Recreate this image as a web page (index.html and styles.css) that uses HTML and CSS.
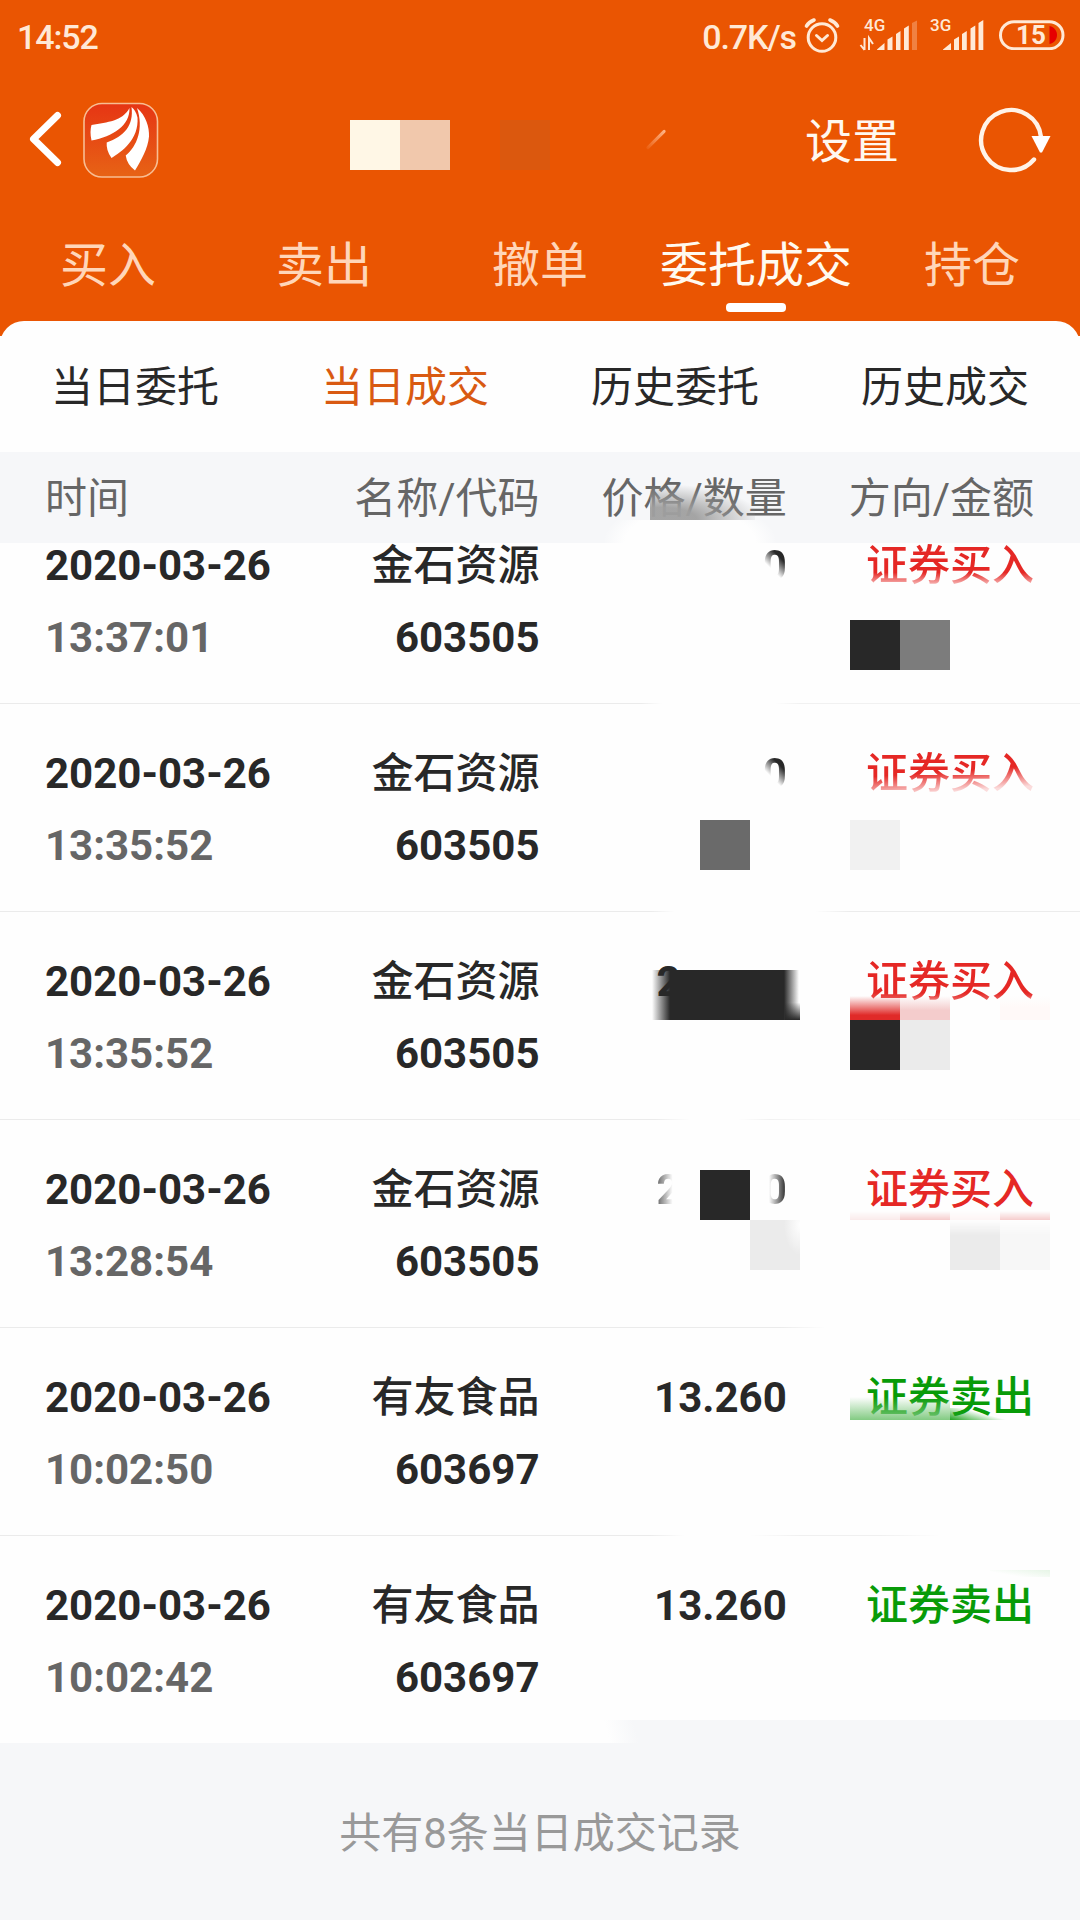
FILE: index.html
```html
<!DOCTYPE html>
<html lang="zh-CN">

<head>
    <meta charset="UTF-8">
    <meta name="viewport" content="width=device-width,initial-scale=1.0">
    <title>当日成交</title>
    <link rel="stylesheet" href="styles.css">
</head>

<body>
    <header class="header">
        <!-- 状态栏 -->
        <div class="status">
            <span class="status_time">14:52</span>
            <span class="status_speed">0.7K/s</span>
            <svg class="alarm" width="36" height="38" viewBox="0 0 36 38" fill="none" stroke="#ffe9d6" stroke-width="3" stroke-linecap="round">
                <circle cx="18" cy="20.5" r="13.8" />
                <path d="M12.5 18.5l5.5 5 5.5-5" />
                <path d="M2.5 9Q5 5 10 3M33.500 9Q31 5 26 3" stroke-width="3.6" />
            </svg>
            <svg class="signal" width="60" height="36" viewBox="0 0 60 36" fill="#ffe9d6">
                <text class="signal_text" x="5" y="15">4G</text>
                <path d="M5.500 22v12M1.500 29l4 5M10 34V22l4 6" fill="none" stroke="#ffe9d6" stroke-width="2" />
                <path d="M18 33.500L25.500 27v7H18zM28.500 23.500l5-3V34h-5zM37 18l4.500-3v19H37zM45 12.500l4.800-3V34H45z" />
                <path d="M53 7l5-2.500V34h-5z" opacity=".3" />
            </svg>
            <svg class="signal signal_second" width="60" height="36" viewBox="0 0 60 36" fill="#ffe9d6">
                <text class="signal_text" x="5" y="15">3G</text>
                <path d="M18 33.500L26 27v7h-8zM29 23.500l5-3V34h-5zM37 18l4.800-3v19H37zM45.500 12.500l4.800-3V34h-4.800zM53.500 7l4.800-3V34h-4.800z" />
            </svg>
            <svg class="battery" width="66" height="30" viewBox="0 0 66 30">
                <rect x="1.500" y="1.700" width="62.500" height="27" rx="13.500" fill="none" stroke="#ffe9d6" stroke-width="3" />
                <path d="M50.500 6c10 2 10 16 0 18z" fill="#e60000" />
                <text class="battery_text" x="32" y="24">15</text>
            </svg>
        </div>
        <!-- 标题栏 -->
        <div class="navbar">
            <svg class="back" width="36" height="60" viewBox="0 0 36 60">
                <path d="M29.500 6.500L5.500 30l24 23.500" fill="none" stroke="#fff" stroke-width="7" stroke-linecap="round" stroke-linejoin="round" />
            </svg>
            <svg class="logo" width="76" height="76" viewBox="83 101.500 76 76">
                <defs>
                    <linearGradient id="logoBg" x1="0" y1="0" x2="0" y2="1">
                        <stop offset="0" stop-color="#e63514" />
                        <stop offset="1" stop-color="#e76315" />
                    </linearGradient>
                </defs>
                <rect x="84" y="103" width="73.500" height="73.500" rx="18" fill="url(#logoBg)" stroke="#f8bd93" stroke-width="1.600" />
                <g fill="#fff">
                    <path d="M91.500 124.500C108 121.500 122 121 129.500 107.500 130 125 113 136 91.500 140Q89.500 131 91.500 124.500z" />
                    <path d="M131.500 106.500C134 125 124 136 106.700 142Q106 150 111.500 157.500C122 151 139 139 137.500 117Q136 110 131.500 106.500z" />
                    <path d="M137 107.500C146 115 149.500 127 149 136 148 148 141 160 135 170Q127 164 125.700 155C137 146 144 128 137 107.500z" />
                </g>
            </svg>
            <div class="title">
                <i class="title_block cream"></i>
                <i class="title_block peach"></i>
                <i class="title_block rust"></i>
                <i class="title_line"></i>
            </div>
            <a class="setting" href="#/setting">设置</a>
            <svg class="refresh" width="74" height="68" viewBox="976.500 105 74 68">
                <path d="M1033.500 159.500A30 30 0 1 1 1040.500 137" fill="none" stroke="#fff3e8" stroke-width="4.400" stroke-linecap="round" />
                <path d="M1031 136h19l-8.500 16.500h-2z" fill="#fff" />
            </svg>
        </div>
        <ul class="tabs">
            <li>买入</li>
            <li>卖出</li>
            <li>撤单</li>
            <li class="active">委托成交</li>
            <li>持仓</li>
        </ul>
    </header>

    <ul class="subtabs">
        <li>当日委托</li>
        <li class="active">当日成交</li>
        <li>历史委托</li>
        <li>历史成交</li>
    </ul>

    <div class="grid thead">
        <span>时间</span>
        <span>名称/代码</span>
        <span>价格/数量</span>
        <span>方向/金额</span>
        <i class="smudge"></i>
        <i class="smudge_light"></i>
    </div>

    <!-- 成交列表 -->
    <div class="list">
        <div class="grid row row1">
            <div><p>2020-03-26</p><p class="time">13:37:01</p></div>
            <div><p class="name">金石资源</p><p>603505</p></div>
            <div class="price"><p><span class="fade_zero">0</span></p></div>
            <div class="buy"><p class="fade_low">证券买入</p></div>
            <i class="block c4 dark"></i>
            <i class="block c5 gray"></i>
        </div>
        <div class="grid row row2">
            <div><p>2020-03-26</p><p class="time">13:35:52</p></div>
            <div><p class="name">金石资源</p><p>603505</p></div>
            <div class="price"><p><span class="fade_zero">0</span></p></div>
            <div class="buy"><p class="fade_low more">证券买入</p></div>
            <i class="block c2 slate"></i>
            <i class="block c4 pale"></i>
        </div>
        <div class="grid row row3">
            <div><p>2020-03-26</p><p class="time">13:35:52</p></div>
            <div><p class="name">金石资源</p><p>603505</p></div>
            <div class="price"><p class="split"><span>2</span></p></div>
            <div class="buy"><p class="fade_low less">证券买入</p></div>
            <i class="bar"></i>
            <i class="stain red"></i>
            <i class="stain pink"></i>
            <i class="stain faint"></i>
            <i class="block c4 dark"></i>
            <i class="block c5 light"></i>
        </div>
        <div class="grid row row4">
            <div><p>2020-03-26</p><p class="time">13:28:54</p></div>
            <div><p class="name">金石资源</p><p>603505</p></div>
            <div class="price"><p class="split"><span class="fade_two">2</span><span class="fade_side">0</span></p></div>
            <div class="buy"><p>证券买入</p></div>
            <i class="block c2 up dark"></i>
            <i class="block c3 light soft_right"></i>
            <i class="strip"></i>
            <i class="block c6 light soft_top"></i>
            <i class="block c7 paler soft_top"></i>
        </div>
        <div class="grid row row5">
            <div><p>2020-03-26</p><p class="time">10:02:50</p></div>
            <div><p class="name">有友食品</p><p>603697</p></div>
            <div class="price"><p>13.260</p></div>
            <div class="sell"><p>证券卖出</p></div>
            <i class="green_wide"></i>
            <i class="green_tail"></i>
        </div>
        <div class="grid row row6">
            <div><p>2020-03-26</p><p class="time">10:02:42</p></div>
            <div><p class="name">有友食品</p><p>603697</p></div>
            <div class="price"><p>13.260</p></div>
            <div class="sell"><p>证券卖出</p></div>
            <i class="green_trace"></i>
            <i class="foot_edge"></i>
        </div>
    </div>

    <footer class="footer">共有8条当日成交记录</footer>
</body>

</html>
```
FILE: styles.css
```css
* {
    padding: 0;
    margin: 0;
    box-sizing: border-box;
}

body {
    width: 1080px;
    height: 1920px;
    display: flex;
    flex-direction: column;
    overflow: hidden;
    background-color: #fefefe;
    font-family: Roboto, "Noto Sans CJK SC", sans-serif;
    font-size: 42px;
    color: #282828;
}

ul {
    list-style: none;
}

a {
    text-decoration: none;
    color: #fff8f0;
}

/* 头部 */
.header {
    height: 336px;
    flex: none;
    background-color: #ea5502;
}

.status {
    height: 78px;
    display: flex;
    align-items: flex-start;
    padding: 16px 16px 0 17px;
    font-size: 34px;
    font-weight: 500;
    line-height: 42px;
    color: #ffe9d6;
}

.status_time {
    flex: 1;
    letter-spacing: -1.1px;
}

.status_speed {
    margin-right: 8px;
    letter-spacing: -1.1px;
}

.alarm {
    margin-right: 19px;
    margin-top: 1px;
}

.signal_second {
    margin-left: 6px;
}

.signal_text {
    font-size: 17px;
    font-weight: 500;
}

.battery {
    margin: 4px -1px 0 14px;
}

.battery_text {
    font-size: 26px;
    font-weight: 700;
    fill: #ffe9d6;
    text-anchor: middle;
}

.navbar {
    height: 122px;
    display: flex;
    align-items: center;
    padding: 0 29px 0 28px;
}

.logo {
    margin-left: 19px;
    margin-top: 1px;
}

.title {
    flex: 1;
    display: flex;
    align-items: center;
    margin-left: 191px;
    margin-top: 12px;
}

.title_block {
    width: 50px;
    height: 50px;
}

.cream {
    background-color: #fff7e6;
}

.peach {
    background-color: #f1c8ac;
}

.rust {
    margin-left: 50px;
    background-color: #db580e;
}

.title_line {
    width: 26px;
    height: 3px;
    margin-left: 93px;
    margin-bottom: 12px;
    border-radius: 2px;
    transform: rotate(-45deg);
    background: linear-gradient(to right, rgba(255, 180, 130, .1), #ffb68a);
}

.setting {
    font-size: 47px;
    line-height: 60px;
    margin-right: 78px;
    margin-top: 6px;
}

.tabs {
    display: flex;
    height: 121px;
    font-size: 48px;
    line-height: 60px;
    color: #ffd6b9;
}

.tabs li {
    flex: 1;
    padding-top: 36px;
    text-align: center;
    white-space: nowrap;
}

.tabs .active {
    color: #fffaf0;
}

.tabs .active::after {
    content: "";
    display: block;
    width: 60px;
    height: 9px;
    margin: 7px auto 0;
    border-radius: 4px;
    background-color: #fff;
}

/* 二级菜单 */
.subtabs {
    display: flex;
    flex: none;
    height: 131px;
    margin-top: -15px;
    border-radius: 24px 24px 0 0;
    background-color: #fefefe;
    line-height: 134px;
    text-align: center;
}

.subtabs li {
    flex: 1;
}

.subtabs .active {
    color: #d95a12;
}

.grid {
    position: relative;
    display: grid;
    grid-template-columns: repeat(4, 1fr);
    padding: 0 46px 0 45px;
    text-align: right;
}

.grid > :first-child {
    text-align: left;
}

.thead {
    flex: none;
    height: 91px;
    line-height: 94px;
    background-color: #f6f7f9;
    color: #666;
}

.smudge,
.smudge_light {
    position: absolute;
}

.smudge {
    left: 650px;
    top: 33px;
    width: 105px;
    height: 35px;
    background: radial-gradient(ellipse 100px 36px at 12px 35px, rgba(160, 160, 160, .95) 35%, rgba(170, 170, 170, 0) 100%);
}

.smudge_light {
    left: 605px;
    top: 68px;
    width: 175px;
    height: 23px;
    background: radial-gradient(ellipse 87px 44px at 85px 23px, #fefefe 75%, rgba(254, 254, 254, 0) 100%);
}

/* 列表 */
.list {
    flex: none;
    height: 1200px;
    font-weight: 700;
    line-height: 72px;
}

.row {
    height: 208px;
    padding-top: 34px;
    background: linear-gradient(to right, #ebebeb, #ebebeb) left bottom / 100% 1px no-repeat;
}

.row p {
    height: 72px;
}

.time {
    color: #666;
}

.name,
.buy,
.sell {
    font-weight: 500;
}

.name + p {
    font-weight: 700;
}

.buy {
    color: #e52825;
}

.sell {
    color: #089b08;
}

/* 首行紧贴表头 */
.row1 {
    height: 161px;
    padding-top: 0;
    background-image: linear-gradient(to right, #ebebeb 640px, transparent 662px, transparent 775px, #f1f1f1 800px);
}

.row1 p {
    height: 59px;
    line-height: 46px;
}

.row1 p + p {
    line-height: 72px;
}

.row2 {
    background-image: linear-gradient(to right, #ebebeb 650px, transparent 675px, transparent 815px, #ececec 850px);
}

.row3 {
    background-image: linear-gradient(to right, #ebebeb 655px, transparent 690px, transparent 738px, #f1f1f1 770px, #fafafa 830px, #f8f8f8);
}

.row4 {
    background-image: linear-gradient(to right, #ebebeb 780px, transparent 825px);
}

.row5 {
    background-image: linear-gradient(to right, #ebebeb 650px, transparent 685px, transparent 750px, #f0f0f0 800px, #f0f0f0 880px, transparent 940px);
}

.row6 {
    background-image: none;
}

.fade_low {
    background: linear-gradient(#e52825 62%, #f6b5b4 77%);
    -webkit-background-clip: text;
    background-clip: text;
    color: transparent;
}

.row1 .fade_low {
    background-image: linear-gradient(#e52825 50%, #f6b5b4 70%);
}

.fade_low.more {
    background-image: linear-gradient(176deg, #e52825 50%, #fbdcdc 73%);
}

.fade_low.less {
    background-image: linear-gradient(#e52825 65%, #ee7a78 80%);
}

.fade_zero,
.fade_side,
.fade_two {
    background: linear-gradient(to left, #333 8%, transparent 75%);
    -webkit-background-clip: text;
    background-clip: text;
    color: transparent;
}

.fade_zero {
    background-image: linear-gradient(225deg, #282828 32%, transparent 60%);
}

.fade_two {
    background-image: linear-gradient(to right, #666, transparent 65%);
}

.split {
    display: flex;
    justify-content: space-between;
    margin-left: 117px;
}

/* 马赛克 */
.block {
    position: absolute;
    top: 108px;
    width: 50px;
    height: 50px;
}

.row1 .block {
    top: 77px;
}

.row2 .block {
    top: 116px;
}

.row4 .block {
    top: 100px;
}

.row4 .up {
    top: 50px;
}

.c2 {
    left: 700px;
}

.c3 {
    left: 750px;
}

.c4 {
    left: 850px;
}

.c5 {
    left: 900px;
}

.c6 {
    left: 950px;
}

.c7 {
    left: 1000px;
}

.dark {
    background-color: #282828;
}

.gray {
    background-color: #7c7c7c;
}

.slate {
    background-color: #6a6a6a;
}

.pale {
    background-color: #f1f1f1;
}

.light {
    background-color: #ebebeb;
}

.paler {
    background-color: #f7f7f7;
}

.soft_top {
    -webkit-mask-image: linear-gradient(transparent, #000 15px);
    mask-image: linear-gradient(transparent, #000 15px);
}

.soft_right {
    background-image: radial-gradient(ellipse 16px 30px at 100% 5px, #fefefe, transparent);
}

.bar {
    position: absolute;
    left: 650px;
    top: 58px;
    width: 150px;
    height: 50px;
    background:
        linear-gradient(transparent 65%, #282828) right / 15px 100% no-repeat,
        linear-gradient(to right, rgba(40, 40, 40, 0) 2px, #282828 20px, #282828 134px, #fefefe 149px);
}

.stain {
    position: absolute;
    top: 84px;
    width: 50px;
    height: 24px;
}

.red {
    left: 850px;
    background: linear-gradient(rgba(229, 40, 37, 0), #e02a28 80%);
}

.pink {
    left: 900px;
    background: linear-gradient(rgba(244, 204, 204, 0), #f4cccc 60%);
}

.faint {
    left: 1000px;
    background: linear-gradient(rgba(255, 249, 248, 0), #fff9f8 50%);
}

.strip {
    position: absolute;
    left: 850px;
    top: 91px;
    width: 200px;
    height: 9px;
    background: linear-gradient(to right, #faeaea 50px, #f5cccc 50px, #f5cccc 100px, #fdf4f4 100px, #fdf4f4 150px, #f5cccc 150px);
    -webkit-mask-image: linear-gradient(transparent, #000);
    mask-image: linear-gradient(transparent, #000);
}

.green_wide,
.green_tail,
.green_trace {
    position: absolute;
    left: 850px;
    top: 69px;
    width: 100px;
    height: 23px;
    background: linear-gradient(rgba(124, 200, 124, 0), rgba(124, 200, 124, .95));
}

.green_tail {
    left: 950px;
    top: 80px;
    width: 60px;
    height: 12px;
    background: linear-gradient(15deg, #1ea31e, rgba(124, 200, 124, 0) 55%);
}

.green_trace {
    left: 990px;
    top: 34px;
    width: 60px;
    height: 7px;
    background: linear-gradient(190deg, #e6f5e6, transparent 70%);
}

.foot_edge {
    position: absolute;
    left: 600px;
    right: 0;
    bottom: 0;
    height: 24px;
    background: linear-gradient(75deg, rgba(246, 247, 249, 0) 10px, #f6f7f9 38px);
}

.footer {
    flex: 1;
    background-color: #f6f7f9;
    line-height: 181px;
    text-align: center;
    color: #999;
}
```
